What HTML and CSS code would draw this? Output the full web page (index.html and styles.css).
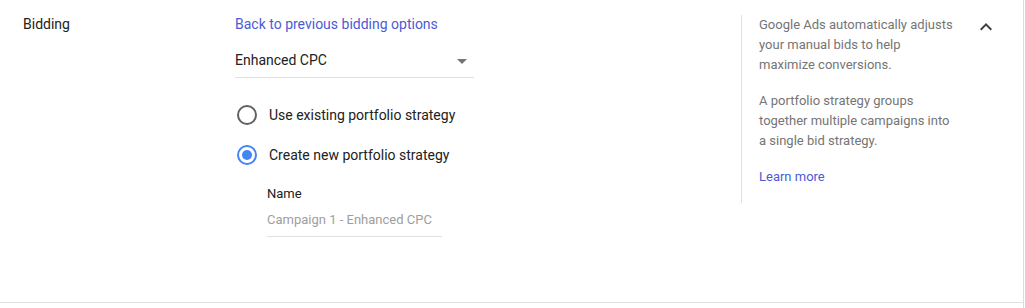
FILE: index.html
```html
<!DOCTYPE html>
<html lang="en">
<head>
    <meta charset="UTF-8">
    <title>Bidding</title>
    <link rel="stylesheet" href="styles.css">
</head>
<body>
    <div class="page">
        <div class="section">
            <div class="label">Bidding</div>

            <div class="main">
                <a class="link" href="#">Back to previous bidding options</a>

                <div class="dropdown">
                    <span>Enhanced CPC</span>
                    <span class="caret"></span>
                </div>

                <div class="radios">
                    <div class="radio-row">
                        <span class="radio"></span>
                        Use existing portfolio strategy
                    </div>
                    <div class="radio-row">
                        <span class="radio checked"></span>
                        Create new portfolio strategy
                    </div>
                </div>

                <div class="name-field">
                    <div class="name-label">Name</div>
                    <div class="name-input">Campaign 1 - Enhanced CPC</div>
                </div>
            </div>

            <div class="help">
                <p>Google Ads automatically adjusts your manual bids to help maximize conversions.</p>
                <p>A portfolio strategy groups together multiple campaigns into a single bid strategy.</p>
                <p><a class="link" href="#">Learn more</a></p>
            </div>

            <div class="toggle">
                <svg width="24" height="24" viewBox="0 0 24 24"><path d="M12 8l-6 6 1.41 1.41L12 10.83l4.59 4.58L18 14z" fill="#3c4043"/></svg>
            </div>
        </div>
    </div>
</body>
</html>
```

FILE: styles.css
```css
*{
    padding: 0;
    margin: 0;
    box-sizing: border-box;
}
body{
    font-family: Roboto, "Noto Sans", sans-serif;
    color: #212121;
    background: #fff;
}
.page{
    width: 1024px;
    height: 308px;
    border-right: 1px solid #dcdcdc;
}
.section{
    height: 303px;
    display: flex;
    border-bottom: 1px solid #e0e0e0;
}
.label{
    width: 235px;
    padding: 14px 0 0 23px;
    font-size: 14px;
    line-height: 20px;
}
.main{
    width: 506px;
    padding-top: 14px;
    font-size: 14px;
    line-height: 20px;
}
.link{
    color: #4a5bd6;
    text-decoration: none;
}
.dropdown{
    width: 239px;
    margin-top: 16px;
    padding-bottom: 7px;
    border-bottom: 1px solid #e0e0e0;
    display: flex;
    justify-content: space-between;
    align-items: center;
}
.caret{
    width: 0;
    height: 0;
    margin: 2px 7px 0 0;
    border-left: 5px solid transparent;
    border-right: 5px solid transparent;
    border-top: 5px solid #757575;
}
.radios{
    margin-top: 17px;
}
.radio-row{
    height: 40px;
    display: flex;
    align-items: center;
    gap: 12px;
}
.radio{
    width: 20px;
    height: 20px;
    margin-left: 2px;
    border: 2px solid #616161;
    border-radius: 50%;
    display: flex;
    align-items: center;
    justify-content: center;
}
.radio.checked{
    border-color: #4285f4;
}
.radio.checked::after{
    content: "";
    width: 10px;
    height: 10px;
    border-radius: 50%;
    background: #4285f4;
}
.name-field{
    margin: 9px 0 0 32px;
    font-size: 13px;
}
.name-label{
    line-height: 20px;
}
.name-input{
    width: 175px;
    margin-top: 6px;
    padding-bottom: 6px;
    line-height: 20px;
    color: #9e9e9e;
    border-bottom: 1px solid #e0e0e0;
}
.help{
    width: 215px;
    height: 188px;
    margin-top: 15px;
    padding: 0 0 0 17px;
    border-left: 1px solid #e0e0e0;
    font-size: 13px;
    line-height: 20px;
    color: #757575;
}
.help p{
    margin-bottom: 16px;
}
.toggle{
    margin: 15px 0 0 18px;
}
```
